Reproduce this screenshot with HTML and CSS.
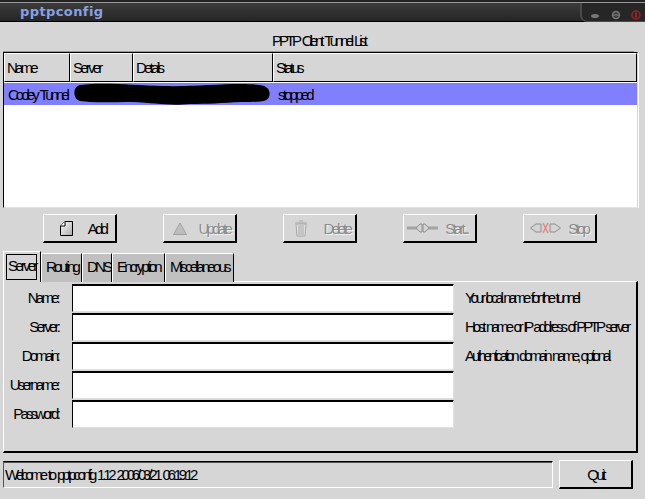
FILE: index.html
```html
<!DOCTYPE html>
<html lang="en">
<head>
<meta charset="utf-8">
<title>pptpconfig</title>
<link rel="stylesheet" href="styles.css">
</head>
<body>
<div class="titlebar">
  <span class="app-title">pptpconfig</span>
  <div class="wm-controls">
    <svg class="wm-svg" width="64" height="21" viewBox="0 0 64 21">
      <ellipse cx="13" cy="13" rx="4" ry="2" fill="#777"/>
      <circle cx="34" cy="12" r="3.5" fill="#3a3a3a" stroke="#777" stroke-width="1.4"/>
      <path d="M31 12h6" stroke="#888" stroke-width="1"/>
      <circle cx="54" cy="12" r="4" fill="none" stroke="#a32020" stroke-width="1.5"/>
      <path d="M54 9.5v5" stroke="#b52a2a" stroke-width="1.5"/>
    </svg>
  </div>
</div>

<main class="window">
  <div class="list-title">PPTP Client Tunnel List</div>

  <section class="listview">
    <div class="list-head">
      <div class="col col-name">Name</div>
      <div class="col col-server">Server</div>
      <div class="col col-details">Details</div>
      <div class="col col-status">Status</div>
    </div>
    <div class="list-row">
      <div class="cell cell-name">Cooley Tunnel</div>
      <div class="cell cell-status">stopped</div>
      <svg class="redaction" width="198" height="25" viewBox="0 0 198 25">
        <path d="M8 3C30 0 60 3 92 4C125 5 165 0 188 3C196 4 199 9 197 15C195 20 188 20 170 20C150 21 135 22 118 22C95 24 85 21 60 20C40 20 20 21 8 19C1 17 0 5 8 3Z" fill="#000"/>
      </svg>
    </div>
  </section>

  <div class="actions">
    <button class="btn b-add">
      <svg width="13" height="15" viewBox="0 0 13 15"><defs><linearGradient id="pg" x1="0" y1="0" x2="1" y2="1"><stop offset="0" stop-color="#fff"/><stop offset="1" stop-color="#aaa"/></linearGradient></defs><path d="M5 .5H12.5V14.5H.5V5Z" fill="url(#pg)" stroke="#000"/><path d="M.5 5H5V.5" fill="#fff" stroke="#000"/></svg>
      <span>Add</span>
    </button>
    <button class="btn off b-update">
      <svg width="14" height="13" viewBox="0 0 14 13"><path d="M7 1L13.5 12.5H.5Z" fill="#bdbdbd" stroke="#a0a0a0"/></svg>
      <span>Update</span>
    </button>
    <button class="btn off b-delete">
      <svg width="14" height="18" viewBox="0 0 14 18"><path d="M2 5h10l-1 12H3Z" fill="#e0e0e0" stroke="#a8a8a8"/><path d="M1 4h12M5 2h4M5 6v10M7 6v10M9 6v10" stroke="#a8a8a8" fill="none"/></svg>
      <span>Delete</span>
    </button>
    <button class="btn off b-start">
      <svg width="31" height="12" viewBox="0 0 31 12"><path d="M0 6h10M21 6h10" stroke="#a4a4a4" stroke-width="3"/><path d="M9 6L13 2H15V10H13ZM22 6L18 2H16V10H18Z" fill="#d4d4d4" stroke="#8e8e8e"/></svg>
      <span>Start...</span>
    </button>
    <button class="btn off b-stop">
      <svg width="31" height="12" viewBox="0 0 31 12"><path d="M.5 6L6 2H11V10H6ZM30.5 6L25 2H20V10H25Z" fill="#d4d4d4" stroke="#8e8e8e"/><path d="M13 1l5 10M18 1l-5 10" stroke="#e58a80" stroke-width="1.6"/></svg>
      <span>Stop</span>
    </button>
  </div>

  <div class="tabs">
    <div class="tab active"><span class="focus">Server</span></div>
    <div class="tab t-routing">Routing</div>
    <div class="tab t-dns">DNS</div>
    <div class="tab t-enc">Encryption</div>
    <div class="tab t-misc">Miscellaneous</div>
  </div>

  <section class="panel">
    <div class="form">
      <label class="label">Name:</label><div class="input"></div><div class="hint">Your local name for the tunnel</div>
      <label class="label">Server:</label><div class="input"></div><div class="hint">Host name or IP address of PPTP server</div>
      <label class="label">Domain:</label><div class="input"></div><div class="hint">Authentication domain name, optional</div>
      <label class="label">Username:</label><div class="input"></div><div class="hint"></div>
      <label class="label">Password:</label><div class="input"></div><div class="hint"></div>
    </div>
  </section>

  <footer class="footer">
    <div class="status">Welcome to pptpconfig 1.12 2006/03/21 06:19:12</div>
    <button class="btn quit">Quit</button>
  </footer>
</main>
</body>
</html>
```
FILE: styles.css
```css
* { box-sizing: border-box; }
html, body { margin: 0; padding: 0; height: 499px; overflow: hidden; }
body {
  background: #d6d6d6;
  color: #000;
  font-family: "Liberation Sans", Arial, sans-serif;
  font-size: 15px;
  letter-spacing: -2.8px;
}
.titlebar {
  height: 22px;
  background: linear-gradient(#3c3c3c, #262626);
  border-top: 2px solid #222;
  box-shadow: inset 0 1px 0 #999;
  border-bottom: 1px solid #000;
  display: flex;
  align-items: center;
  justify-content: space-between;
  padding-left: 20px;
}
.app-title {
  font-family: "DejaVu Sans", sans-serif;
  font-weight: bold;
  font-size: 13px;
  letter-spacing: 0.4px;
  color: #86a1e4;
}
.wm-controls {
  width: 65px;
  height: 19px;
  align-self: flex-end;
  background: #262626;
  border-left: 2px solid #4a4a4a;
  border-bottom: 1px solid #4a4a4a;
  border-bottom-left-radius: 7px;
  margin-bottom: -1px;
}
.wm-svg { display: block; }
.window { padding: 0 7px 0 3px; }
.list-title {
  height: 30px;
  padding-top: 10px;
  text-align: center;
  line-height: 17px;
  margin-right: 4px;
  border-bottom: 1px solid #999;
  letter-spacing: -3.1px;
  word-spacing: 2px;
}
.listview {
  width: 635px;
  height: 156px;
  background: #fff;
  border-top: 1px solid #000;
  border-left: 1px solid #000;
  border-right: 1px solid #d6d6d6;
  border-bottom: 1px solid #e4e4e4;
  box-shadow: 1px 0 0 #fff;
}
.list-head { display: flex; height: 29px; }
.col {
  height: 29px;
  background: #d6d6d6;
  border-top: 1px solid #fff;
  border-left: 1px solid #fff;
  border-right: 1px solid #000;
  border-bottom: 1px solid #000;
  padding-left: 2px;
  line-height: 27px;
}
.col-name { width: 66px; }
.col-server { width: 63px; }
.col-details { width: 140px; }
.col-status { flex: 1; }
.list-row {
  position: relative;
  display: flex;
  margin-top: 1px;
  height: 22px;
  line-height: 24px;
  background: #8080ff;
}
.cell-name { width: 269px; padding-left: 4px; word-spacing: 2px; letter-spacing: -3px; }
.cell-status { padding-left: 5px; }
.redaction { position: absolute; left: 68px; top: -1px; }
.actions {
  display: flex;
  gap: 46px;
  padding: 6px 0 0 40px;
  height: 42px;
}
.btn {
  width: 74px;
  height: 29px;
  background: #d6d6d6;
  border-style: solid;
  border-width: 1px 2px 2px 1px;
  border-color: #fff #000 #000 #fff;
  font: inherit;
  letter-spacing: inherit;
  color: #000;
  display: flex;
  align-items: center;
  justify-content: space-between;
}
.btn.off { color: #8b8b8b; text-shadow: 1px 1px 0 #f2f2f2; }
.b-add { padding: 0 9px 0 16px; }
.b-update { padding: 0 5px 0 9px; }
.b-delete { padding: 0 5px 0 10px; }
.b-start { padding: 0 8px 0 3px; }
.b-stop { padding: 0 7px 0 6px; }
.tabs { display: flex; height: 32px; align-items: flex-end; padding-left: 0; }
.tab {
  height: 29px;
  background: #c0c0c0;
  border-top: 1px solid #fff;
  border-left: 1px solid #fff;
  border-right: 1px solid #000;
  padding: 0 0 0 4px;
  line-height: 25px;
  white-space: nowrap;
}
.tab.active {
  width: 38px;
  height: 31px;
  background: #d6d6d6;
  padding: 2px 0 0 2px;
  line-height: 22px;
}
.focus { display: block; width: 31px; height: 26px; border: 1px solid #000; padding-left: 1px; line-height: 22px; }
.t-routing { width: 41px; }
.t-dns { width: 30px; }
.t-enc { width: 53px; }
.t-misc { width: 69px; }
.panel {
  width: 635px;
  height: 172px;
  border-top: 1px solid #fff;
  border-left: 1px solid #fff;
  border-right: 2px solid #000;
  border-bottom: 2px solid #000;
  margin-top: -1px;
  padding-top: 2px;
}
.form {
  display: grid;
  grid-template-columns: 54px 382px 1fr;
  column-gap: 14px;
  grid-auto-rows: 28px;
  row-gap: 1px;
}
.form .hint { margin-left: -3px; }
.label { text-align: right; line-height: 28px; white-space: nowrap; }
.input {
  height: 28px;
  background: #fff;
  border-top: 1px solid #000;
  border-left: 1px solid #000;
  border-right: 1px solid #e0e0e0;
  border-bottom: 1px solid #e0e0e0;
  box-shadow: inset 0 1px 0 #000;
}
.hint { line-height: 28px; white-space: nowrap; letter-spacing: -3.12px; word-spacing: 1.5px; }
.footer { display: flex; gap: 6px; margin-top: 7px; align-items: flex-start; }
.status {
  width: 550px;
  height: 27px;
  margin-top: 1px;
  border-top: 1px solid #000;
  box-shadow: inset 0 1px 0 #555;
  border-bottom: 1px solid #fff;
  border-right: 1px solid #fff;
  border-left: 1px solid #555;
  line-height: 26px;
  padding-left: 1px;
  letter-spacing: -3.2px;
  word-spacing: 2px;
}
.btn.quit {
  justify-content: center;
  padding: 0;
}
```
